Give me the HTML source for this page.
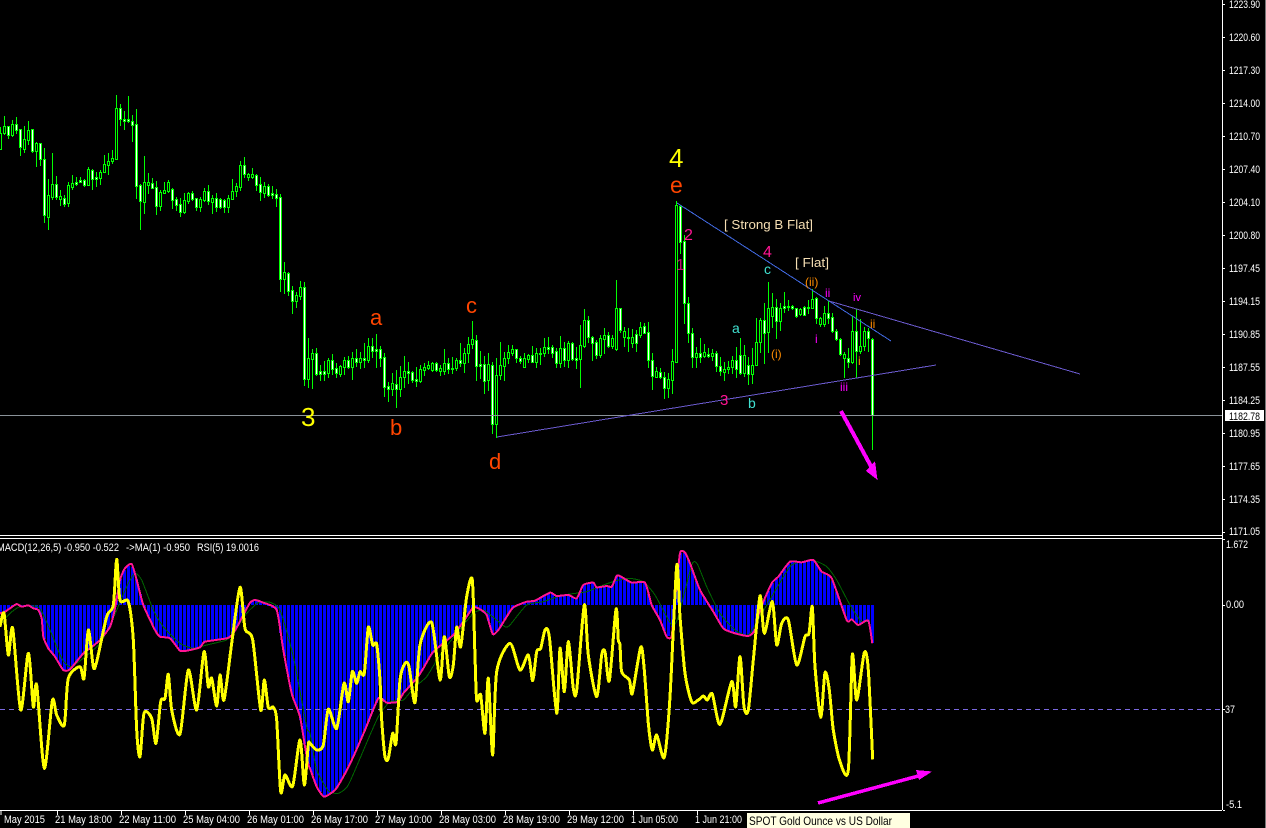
<!DOCTYPE html>
<html><head><meta charset="utf-8"><style>
html,body{margin:0;padding:0;background:#000;width:1266px;height:828px;overflow:hidden}
svg{display:block;position:absolute;left:0;top:0}
text{font-family:"Liberation Sans",sans-serif}
.ax{fill:#fff;font-size:11px}
</style></head><body>
<svg id="s" xmlns="http://www.w3.org/2000/svg" width="1266" height="828" viewBox="0 0 1266 828">
<rect width="1266" height="828" fill="#000"/>
<g id="hist" shape-rendering="crispEdges"></g>
<line x1="0" y1="709.5" x2="1222" y2="709.5" stroke="#7a68e0" stroke-dasharray="5 4" shape-rendering="crispEdges"/>
<g id="cand" shape-rendering="crispEdges"></g>
<g id="inds" fill="none" stroke-linejoin="round" shape-rendering="crispEdges"></g>
<g shape-rendering="crispEdges">
<line x1="0" y1="415.5" x2="1222" y2="415.5" stroke="#8a9299"/>
<line x1="497" y1="437" x2="936" y2="365" stroke="#6a5acd"/>
<line x1="677" y1="203" x2="891" y2="341" stroke="#4169e1"/>
<line x1="829" y1="301" x2="1080" y2="374" stroke="#6a5acd"/>
<path d="M841 411L873 470" stroke="#f0f" stroke-width="4" fill="none"/>
<path d="M877.5 480L866 471L875 461Z" fill="#f0f"/>
<path d="M818 803L922 775" stroke="#f0f" stroke-width="3.5" fill="none"/>
<path d="M932 771.5L916 770L919 780Z" fill="#f0f"/>
<path d="M0 535.5H1222M0 538.5H1222M0 810.5H1222M1222.5 0V810" stroke="#fff" fill="none"/>
<path d="M1265.5 0V828" stroke="#777" fill="none"/>
<path d="M1223 4.5h2M1223 37.5h2M1223 70.5h2M1223 103.5h2M1223 136.5h2M1223 169.5h2M1223 202.5h2M1223 235.5h2M1223 268.5h2M1223 301.5h2M1223 334.5h2M1223 367.5h2M1223 400.5h2M1223 433.5h2M1223 466.5h2M1223 499.5h2M1223 532.5h2M1223 539.5h2M1223 605.5h2M1223 709.5h2M1223 810.5h2" stroke="#fff" fill="none"/>
<path d="M57.5 811v4M121.5 811v4M185.5 811v4M249.5 811v4M313.5 811v4M377.5 811v4M441.5 811v4M505.5 811v4M569.5 811v4M633.5 811v4M697.5 811v4M1 811v4" stroke="#fff" fill="none"/>
<rect x="1225" y="410" width="39" height="11" fill="#fff"/>
</g>
<g class="ax">
<text class="ax" x="1229" y="8" textLength="31" lengthAdjust="spacingAndGlyphs">1223.90</text>
<text class="ax" x="1229" y="41" textLength="31" lengthAdjust="spacingAndGlyphs">1220.60</text>
<text class="ax" x="1229" y="74" textLength="31" lengthAdjust="spacingAndGlyphs">1217.30</text>
<text class="ax" x="1229" y="107" textLength="31" lengthAdjust="spacingAndGlyphs">1214.00</text>
<text class="ax" x="1229" y="140" textLength="31" lengthAdjust="spacingAndGlyphs">1210.70</text>
<text class="ax" x="1229" y="173" textLength="31" lengthAdjust="spacingAndGlyphs">1207.40</text>
<text class="ax" x="1229" y="206" textLength="31" lengthAdjust="spacingAndGlyphs">1204.10</text>
<text class="ax" x="1229" y="239" textLength="31" lengthAdjust="spacingAndGlyphs">1200.80</text>
<text class="ax" x="1229" y="272" textLength="31" lengthAdjust="spacingAndGlyphs">1197.45</text>
<text class="ax" x="1229" y="305" textLength="31" lengthAdjust="spacingAndGlyphs">1194.15</text>
<text class="ax" x="1229" y="338" textLength="31" lengthAdjust="spacingAndGlyphs">1190.85</text>
<text class="ax" x="1229" y="371" textLength="31" lengthAdjust="spacingAndGlyphs">1187.55</text>
<text class="ax" x="1229" y="404" textLength="31" lengthAdjust="spacingAndGlyphs">1184.25</text>
<text class="ax" x="1229" y="437" textLength="31" lengthAdjust="spacingAndGlyphs">1180.95</text>
<text class="ax" x="1229" y="470" textLength="31" lengthAdjust="spacingAndGlyphs">1177.65</text>
<text class="ax" x="1229" y="503" textLength="31" lengthAdjust="spacingAndGlyphs">1174.35</text>
<text class="ax" x="1229" y="535" textLength="31" lengthAdjust="spacingAndGlyphs">1171.05</text>
<text x="1229" y="420" fill="#000" font-size="11" textLength="31" lengthAdjust="spacingAndGlyphs">1182.78</text>
<text class="ax" x="1226" y="548" textLength="22" lengthAdjust="spacingAndGlyphs">1.672</text>
<text class="ax" x="1226" y="608" textLength="18" lengthAdjust="spacingAndGlyphs">0.00</text>
<text class="ax" x="1225" y="713" textLength="10" lengthAdjust="spacingAndGlyphs">37</text>
<text class="ax" x="1226" y="808" textLength="16" lengthAdjust="spacingAndGlyphs">-5.1</text>
<text class="ax" x="4" y="823" textLength="41" lengthAdjust="spacingAndGlyphs">May 2015</text>
<text class="ax" x="55" y="823" textLength="57" lengthAdjust="spacingAndGlyphs">21 May 18:00</text>
<text class="ax" x="119" y="823" textLength="57" lengthAdjust="spacingAndGlyphs">22 May 11:00</text>
<text class="ax" x="183" y="823" textLength="57" lengthAdjust="spacingAndGlyphs">25 May 04:00</text>
<text class="ax" x="247" y="823" textLength="57" lengthAdjust="spacingAndGlyphs">26 May 01:00</text>
<text class="ax" x="311" y="823" textLength="57" lengthAdjust="spacingAndGlyphs">26 May 17:00</text>
<text class="ax" x="375" y="823" textLength="57" lengthAdjust="spacingAndGlyphs">27 May 10:00</text>
<text class="ax" x="439" y="823" textLength="57" lengthAdjust="spacingAndGlyphs">28 May 03:00</text>
<text class="ax" x="503" y="823" textLength="57" lengthAdjust="spacingAndGlyphs">28 May 19:00</text>
<text class="ax" x="567" y="823" textLength="57" lengthAdjust="spacingAndGlyphs">29 May 12:00</text>
<text class="ax" x="631" y="823" textLength="47" lengthAdjust="spacingAndGlyphs">1 Jun 05:00</text>
<text class="ax" x="695" y="823" textLength="47" lengthAdjust="spacingAndGlyphs">1 Jun 21:00</text>
<text class="ax" x="-3" y="551" textLength="122" lengthAdjust="spacingAndGlyphs">MACD(12,26,5) -0.950 -0.522</text>
<text class="ax" x="126" y="551" textLength="64" lengthAdjust="spacingAndGlyphs">-&gt;MA(1) -0.950</text>
<text class="ax" x="197" y="551" textLength="62" lengthAdjust="spacingAndGlyphs">RSI(5) 19.0016</text>
</g>
<rect x="747" y="813" width="163" height="15" fill="#ffffe1"/>
<text x="749" y="825" fill="#000" font-size="12" textLength="143" lengthAdjust="spacingAndGlyphs">SPOT Gold Ounce vs US Dollar</text>
<g>
<text x="669" y="167" fill="#ffff00" font-size="26">4</text>
<text x="670" y="193" fill="#ff4500" font-size="23">e</text>
<text x="301" y="426" fill="#ffff00" font-size="26">3</text>
<text x="370" y="325" fill="#ff4500" font-size="22">a</text>
<text x="390" y="435" fill="#ff4500" font-size="22">b</text>
<text x="466" y="313" fill="#ff4500" font-size="22">c</text>
<text x="489" y="469" fill="#ff4500" font-size="22">d</text>
<text x="724" y="229" fill="#f5deb3" font-size="12.5" textLength="89" lengthAdjust="spacingAndGlyphs">[ Strong B Flat]</text>
<text x="795" y="267" fill="#f5deb3" font-size="12.5" textLength="34" lengthAdjust="spacingAndGlyphs">[ Flat]</text>
<text x="763" y="257" fill="#ff1493" font-size="16">4</text>
<text x="684" y="240" fill="#ff1493" font-size="16">2</text>
<text x="676" y="270" fill="#ff1493" font-size="16" opacity=".75">1</text>
<text x="720" y="405" fill="#ff1493" font-size="15">3</text>
<text x="764" y="274" fill="#40e0d0" font-size="14">c</text>
<text x="732" y="333" fill="#40e0d0" font-size="14">a</text>
<text x="748" y="408" fill="#40e0d0" font-size="14">b</text>
<text x="805" y="286" fill="#ff8c00" font-size="12">(ii)</text>
<text x="771" y="358" fill="#ff8c00" font-size="12">(i)</text>
<text x="815" y="343" fill="#f0f" font-size="12">i</text>
<text x="825" y="297" fill="#f0f" font-size="12">ii</text>
<text x="840" y="391" fill="#f0f" font-size="12">iii</text>
<text x="853" y="301" fill="#f0f" font-size="11">iv</text>
<text x="858" y="365" fill="#ff8c00" font-size="12">i</text>
<text x="870" y="328" fill="#ff8c00" font-size="12">ii</text>
</g>
</svg>
<script>
var NS="http://www.w3.org/2000/svg";
function P(parent,d,attrs){var e=document.createElementNS(NS,"path");e.setAttribute("d",d);for(var k in attrs)e.setAttribute(k,attrs[k]);parent.appendChild(e);}
var seg1=[[110,128,178,178,0],[78,108,130,132,0],[108,108,135,145,1],[90,102,135,138,0],[82,102,120,130,1],[118,118,172,195,1],[108,148,176,186,0],[93,120,150,162,0],[117,117,183,186,1],[155,158,182,228,0],[160,160,208,225,1],[175,208,376,396,1],[267,316,380,417,0],[190,283,320,328,0],[258,283,320,328,1],[300,318,326,345,0],[314,325,341,348,1],[277,286,338,348,0],[255,280,290,297,0],[262,276,282,286,1],[262,270,275,275,1],[268,270,286,288,1],[232,238,285,286,0],[238,240,266,297,1],[246,262,267,288,1],[240,247,263,282,0],[195,222,245,245,0],[189,212,224,252,0],[180,205,213,220,0],[15,55,206,208,0],[42,55,88,105,1],[64,87,92,117,1],[18,87,93,95,1],[75,92,104,153,1],[57,103,287,324,1],[283,286,332,417,1],[198,277,335,370,0],[250,277,284,310,0],[265,280,293,295,1],[274,292,347,372,1],[300,306,347,360,0],[276,300,308,308,0],[270,277,303,305,0],[294,298,329,354,1],[322,328,345,360,1],[324,343,365,378,1],[309,331,366,369,0],[306,309,332,339,0],[303,309,327,329,1],[323,325,350,360,1],[322,328,351,363,0],[294,304,331,332,0],[285,304,332,342,1],[316,325,335,369,0],[309,325,351,363,1],[323,327,351,354,1],[328,331,350,366,1],[316,325,351,366,0],[267,304,327,327,0],[280,289,302,318,0],[213,226,290,300,0],[201,226,252,261,1],[250,252,261,270,0],[234,253,261,265,0],[252,256,284,300,1],[262,283,307,330,1],[277,289,308,321,0],[282,289,315,318,1],[289,309,315,324,1],[297,313,324,348,1],[313,322,566,603,1],[516,547,566,609,0],[545,550,602,615,1],[589,601,632,669,1],[606,616,632,651,0],[573,592,617,627,0],[576,592,866,885,1],[744,805,866,891,0],[778,790,806,894,0],[774,790,851,855,1]];
var seg2=[[255,272,282,300,1],[243,272,282,300,1],[235,240,280,290,0],[222,240,267,283,1],[250,265,278,290,1],[255,258,282,288,0],[232,240,260,282,0],[228,240,260,265,1],[215,235,260,297,0],[208,235,245,258,1],[215,235,245,265,0],[188,235,240,260,1],[175,198,240,245,0],[175,198,212,232,1],[162,208,212,260,1],[198,208,235,258,1],[220,232,320,348,1],[305,318,326,362,1],[280,310,326,345,0],[270,313,326,380,1],[258,290,326,348,0],[228,274,290,320,0],[245,274,278,308,1],[272,275,299,305,1],[262,298,302,318,1],[255,268,302,305,0],[250,262,270,285,0],[243,255,264,268,0],[245,250,270,272,0],[245,250,270,272,1],[255,265,272,285,0],[208,250,272,282,0],[235,250,268,280,1],[232,265,268,280,1],[235,240,263,270,0],[190,240,248,258,1],[205,220,248,275,0],[172,193,218,245,0],[124,178,193,205,0],[165,181,257,300,1],[212,253,258,295,1],[228,252,302,338,1],[218,253,300,330,0],[245,256,433,460,1],[235,284,433,472,0],[187,256,284,298,0],[215,235,257,300,0],[196,217,235,250,0],[195,208,218,225,0],[206,208,233,245,1],[228,235,242,250,1],[218,235,260,262,0],[222,225,237,245,0],[198,225,245,245,1],[205,220,245,260,0],[205,220,222,252,1],[175,202,220,228,0],[172,202,208,218,1],[195,202,218,232,1],[205,213,248,262,1],[168,205,250,260,0],[185,205,240,258,1],[182,190,240,262,0],[185,190,237,240,1],[200,235,240,265,1],[135,195,238,320,0],[87,120,197,200,0],[108,120,172,185,1],[168,172,188,240,1],[180,187,225,235,1],[165,175,225,232,0],[145,165,176,220,0],[155,165,197,200,1],[165,175,198,205,0],[0,85,208,210,0]];
var seg3=[[505,505,570,575,1],[560,572,590,618,0],[565,590,592,632,1],[566,590,608,620,0],[570,583,608,632,1],[546,560,585,590,0],[548,558,580,580,1],[545,576,660,680,1],[640,660,708,748,1],[680,692,710,710,0],[685,695,712,715,1],[695,712,743,773,1],[700,716,743,770,0],[627,663,721,760,0],[183,195,665,665,0],[195,198,305,338,1],[285,303,490,548,1],[472,490,580,605,1],[565,580,650,680,1],[622,638,650,682,0],[593,638,650,665,1],[612,636,648,650,0],[625,642,648,650,1],[628,638,648,660,0],[632,640,677,693,1],[650,677,693,705,1],[665,688,695,720,0],[662,680,688,700,0],[648,660,682,698,0],[622,660,686,712,1],[594,646,700,702,1],[615,646,700,708,0],[650,675,702,733,1],[625,675,702,730,0],[535,605,675,675,0],[535,540,605,636,0],[488,540,578,670,1],[426,505,575,635,0],[460,502,527,560,0],[478,500,542,595,1],[490,505,542,570,0],[455,498,505,515,1],[480,497,502,510,1],[495,497,505,508,1],[505,505,528,530,1],[505,508,522,525,0],[498,502,524,524,1],[480,500,503,520,1],[448,478,503,505,0],[470,475,535,548,1],[530,535,553,558,0],[497,520,552,558,0],[483,520,533,548,1],[518,532,573,576,1],[568,572,598,600,1],[595,598,643,645,1],[635,643,655,710,0],[625,655,665,680,1],[528,574,665,668,0],[508,574,634,712,1],[538,618,634,638,0],[562,574,618,630,0],[565,574,595,632,1],[594,596,826,928,1]];
var wicks="",bodies="",whites="",blacks="";
function addC(seg,x0,oy){seg.forEach(function(c,i){var x=x0+i*4,
 h=Math.round(oy+c[0]/3),t=Math.round(oy+c[1]/3),b=Math.round(oy+c[2]/3),l=Math.round(oy+c[3]/3);
 if(b-t<1)b=t+1;
 wicks+="M"+(x+.5)+" "+h+"V"+(l+1);
 bodies+="M"+(x+.5)+" "+t+"V"+(b+1);
 if(b-t>=2){var s="M"+(x+.5)+" "+(t+1)+"V"+b;if(c[4])whites+=s;else blacks+=s;}
});}
addC(seg1,0,90);addC(seg2,320,280);addC(seg3,620,140);
var g=document.getElementById("cand");
P(g,wicks,{stroke:"#00ff00",fill:"none"});
P(g,bodies,{stroke:"#00ff00","stroke-width":3,fill:"none"});
P(g,blacks,{stroke:"#000",fill:"none"});
P(g,whites,{stroke:"#fff",fill:"none"});
function line(a,b,c){var r=[],i;
 for(i=0;i<a.length;i+=2){var x=a[i]/3;if(x<310)r.push([x,530+a[i+1]/3]);}
 for(i=0;i<b.length;i+=2){var x2=310+b[i]/3;if(x2<620)r.push([x2,530+b[i+1]/3]);}
 for(i=0;i<c.length;i+=2){r.push([620+c[i]/3,530+c[i+1]/3]);}
 return r;}
var pink=line([0,250,15,245,30,235,50,222,65,230,85,226,100,235,115,240,125,265,130,320,145,355,165,380,190,420,210,418,250,370,270,355,300,330,330,290,345,235,360,150,375,115,395,102,410,150,430,225,465,300,480,320,510,325,540,362,560,362,600,352,615,335,680,325,700,310,730,255,750,218,765,210,790,218,830,240,850,360,875,490,900,560,920,680,929,715],
[0,715,20,770,42,800,75,780,100,740,130,680,165,600,205,505,230,518,265,515,280,490,320,445,340,415,370,365,430,315,460,275,490,232,510,238,530,255,548,312,565,300,590,260,610,232,650,215,675,212,720,188,740,198,775,195,800,205,820,165,850,158,860,172,890,168,905,170,920,138],
[0,138,35,158,75,158,95,225,120,270,140,320,155,318,165,210,180,70,195,68,210,100,240,180,280,245,310,295,345,310,385,318,405,300,420,240,455,160,475,140,510,95,545,97,580,90,605,125,635,145,680,270,695,268,715,285,745,272,757,340]);
var green=line([0,285,30,250,60,230,110,228,125,245,150,300,185,385,210,410,250,385,300,340,335,275,365,205,385,160,405,130,425,150,460,240,490,290,540,340,580,355,620,345,680,330,700,310,740,250,775,218,810,217,840,240,880,380,920,590],
[0,610,20,720,55,782,85,790,115,765,165,650,205,560,240,515,280,510,310,475,350,440,390,375,440,310,490,250,520,240,550,262,585,290,600,285,650,225,700,215,760,195,830,185,880,165,925,150],
[0,150,30,145,70,155,105,195,155,285,175,260,215,105,232,102,260,170,300,250,345,300,385,315,420,260,470,175,515,105,580,92,620,110,650,150,690,225,725,275,750,270]);
var yellow=line([0,290,12,250,25,375,38,295,62,540,85,370,100,530,110,465,133,715,157,512,170,555,193,585,205,445,240,410,252,445,265,300,280,410,290,395,320,260,340,225,350,88,360,210,385,215,400,330,410,600,420,680,432,550,455,565,468,640,482,515,495,505,505,433,515,540,540,612,565,420,590,540,612,365,625,470,635,445,650,528,660,435,672,510,695,340,720,172,735,295,758,330,782,540,793,450,805,532,820,532,830,570,842,785,855,735,878,768,900,630,913,765,925,645],
[0,640,20,660,40,645,55,538,80,595,102,460,115,515,127,425,140,460,150,425,163,430,175,292,188,345,200,343,210,450,215,570,225,680,235,685,248,610,258,640,270,450,285,400,297,410,315,518,330,345,365,278,390,450,403,320,418,440,430,405,440,292,452,350,470,200,487,150,495,380,500,510,512,495,525,610,535,445,548,675,560,425,600,340,630,420,655,375,668,452,680,365,692,355,705,300,718,320,740,550,750,355,763,485,775,335,790,475,800,480,823,225,835,375,860,500,875,375,885,365,898,452,918,238,925,330],
[0,345,5,425,28,450,37,490,62,352,72,410,85,580,97,660,110,615,133,682,150,500,170,108,180,260,195,430,215,515,235,510,250,498,262,510,277,492,300,583,335,455,347,530,360,380,372,530,385,540,400,390,420,198,433,310,457,215,470,345,485,280,505,270,530,405,555,320,567,310,577,230,585,410,602,562,615,428,628,480,640,600,660,695,685,720,697,375,710,510,733,368,745,420,758,688]);
function toD(a,k){var d="M"+a[0][0].toFixed(1)+" "+a[0][1].toFixed(1);
 for(var i=0;i<a.length-1;i++){var p0=a[i-1]||a[i],p1=a[i],p2=a[i+1],p3=a[i+2]||a[i+1];
  d+="C"+(p1[0]+(p2[0]-p0[0])*k).toFixed(1)+" "+(p1[1]+(p2[1]-p0[1])*k).toFixed(1)+" "+(p2[0]-(p3[0]-p1[0])*k).toFixed(1)+" "+(p2[1]-(p3[1]-p1[1])*k).toFixed(1)+" "+p2[0].toFixed(1)+" "+p2[1].toFixed(1);}
 return d;}
var hist="";
function yAt(a,x){for(var i=0;i<a.length-1;i++){if(x>=a[i][0]&&x<=a[i+1][0]){var t=(x-a[i][0])/((a[i+1][0]-a[i][0])||1);return a[i][1]+t*(a[i+1][1]-a[i][1]);}}return a[a.length-1][1];}
for(var x=0;x<=872;x+=4){var y=Math.round(yAt(pink,x+.5));hist+="M"+(x+.5)+" 605V"+y;}
P(document.getElementById("hist"),hist,{stroke:"#0000ff","stroke-width":3,fill:"none"});
var ig=document.getElementById("inds");
P(ig,toD(green,.1),{stroke:"#006400","stroke-width":1});
P(ig,toD(pink,.1),{stroke:"#ff1493","stroke-width":2});
P(ig,toD(yellow,.13),{stroke:"#ffff00","stroke-width":3});
</script>
</body></html>
